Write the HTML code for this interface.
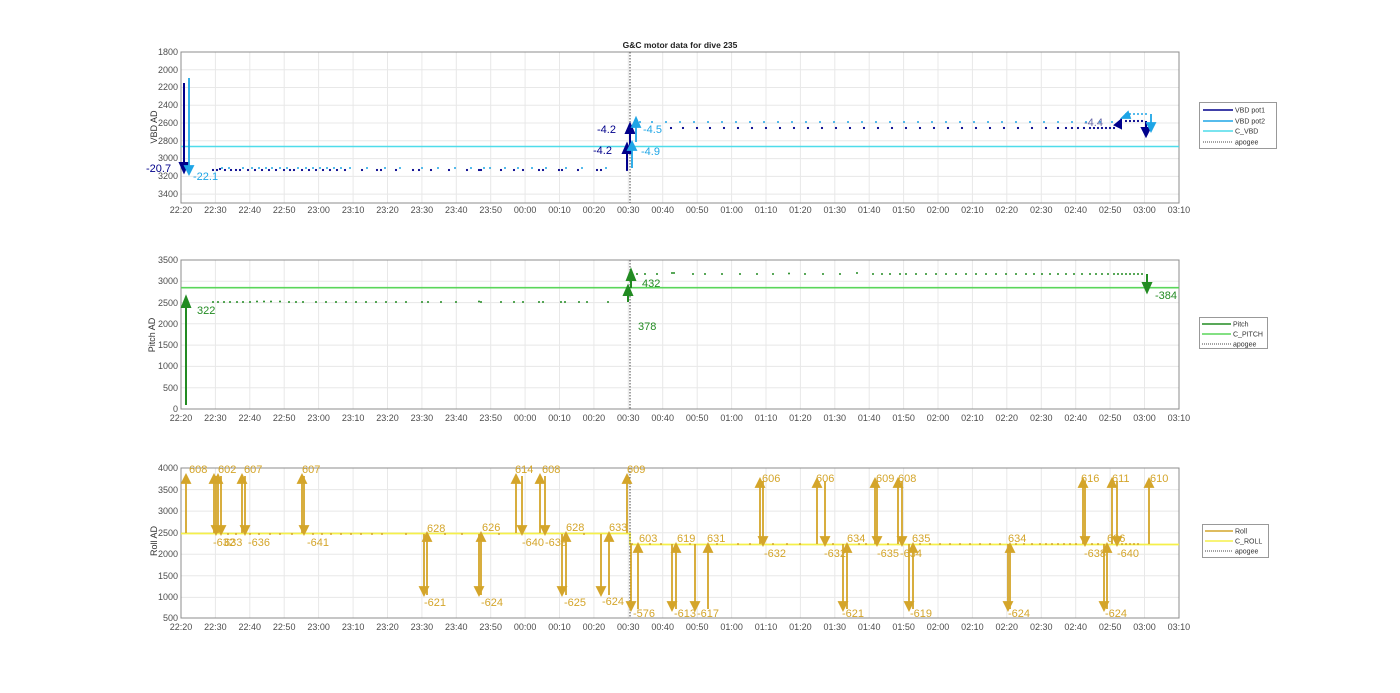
<!DOCTYPE html>
<html><head><meta charset="utf-8"><style>
html,body{margin:0;padding:0;background:#fff;}
svg{display:block;font-family:"Liberation Sans",sans-serif;}
.tx{font-size:9px;fill:#4d4d4d;text-anchor:middle}
.ty{font-size:9px;fill:#4d4d4d;text-anchor:end}
.grid{stroke:#e8e8e8;stroke-width:1;fill:none}
.ax{stroke:#8c8c8c;stroke-width:1;fill:none}
.lg{font-size:7px;fill:#333}
.b1{fill:#00008b;font-size:11px}
.b2{fill:#1ea5e6;font-size:11px}
.g{fill:#228b22;font-size:11px}
.r{fill:#d4a52a;font-size:11px}
</style></head><body>
<svg width="1400" height="693" viewBox="0 0 1400 693" xmlns="http://www.w3.org/2000/svg">
<rect width="1400" height="693" fill="#fff"/>
<text x="680" y="48" font-size="8.5" font-weight="bold" text-anchor="middle" fill="#222">G&amp;C motor data for dive 235</text>

<!-- ================= TOP PLOT ================= -->
<path class="grid" d="M215.4 52V203M249.8 52V203M284.2 52V203M318.6 52V203M353.1 52V203M387.5 52V203M421.9 52V203M456.3 52V203M490.7 52V203M525.1 52V203M559.5 52V203M593.9 52V203M628.3 52V203M662.7 52V203M697.2 52V203M731.6 52V203M766 52V203M800.4 52V203M834.8 52V203M869.2 52V203M903.6 52V203M938 52V203M972.4 52V203M1006.8 52V203M1041.3 52V203M1075.7 52V203M1110.1 52V203M1144.5 52V203M181 69.8H1179M181 87.5H1179M181 105.3H1179M181 123H1179M181 140.8H1179M181 158.6H1179M181 176.4H1179M181 194.1H1179"/>
<rect class="ax" x="181" y="52" width="998" height="151"/>
<g class="ty"><text x="178" y="55">1800</text><text x="178" y="73">2000</text><text x="178" y="90">2200</text><text x="178" y="108">2400</text><text x="178" y="126">2600</text><text x="178" y="144">2800</text><text x="178" y="161">3000</text><text x="178" y="179">3200</text><text x="178" y="197">3400</text></g>
<g class="tx"><text x="181" y="213">22:20</text><text x="215.4" y="213">22:30</text><text x="249.8" y="213">22:40</text><text x="284.2" y="213">22:50</text><text x="318.6" y="213">23:00</text><text x="353.1" y="213">23:10</text><text x="387.5" y="213">23:20</text><text x="421.9" y="213">23:30</text><text x="456.3" y="213">23:40</text><text x="490.7" y="213">23:50</text><text x="525.1" y="213">00:00</text><text x="559.5" y="213">00:10</text><text x="593.9" y="213">00:20</text><text x="628.3" y="213">00:30</text><text x="662.7" y="213">00:40</text><text x="697.2" y="213">00:50</text><text x="731.6" y="213">01:00</text><text x="766" y="213">01:10</text><text x="800.4" y="213">01:20</text><text x="834.8" y="213">01:30</text><text x="869.2" y="213">01:40</text><text x="903.6" y="213">01:50</text><text x="938" y="213">02:00</text><text x="972.4" y="213">02:10</text><text x="1006.8" y="213">02:20</text><text x="1041.3" y="213">02:30</text><text x="1075.7" y="213">02:40</text><text x="1110.1" y="213">02:50</text><text x="1144.5" y="213">03:00</text><text x="1178.9" y="213">03:10</text></g>
<text transform="translate(157,127) rotate(-90)" font-size="9" fill="#333" text-anchor="middle">VBD AD</text>
<!-- C_VBD -->
<line x1="181" y1="146.5" x2="1179" y2="146.5" stroke="#4fdcea" stroke-width="1.6"/>
<!-- dots pot1 -->
<path stroke="#00008b" stroke-width="2.2" stroke-linecap="round" fill="none" d="M213 170h0M217 170h0M220 169h0M225 170h0M231 170h0M236 170h0M240 170h0M248 170h0M255 170h0M262 170h0M269 170h0M276 170h0M284 170h0M290 170h0M294 170h0M302 170h0M309 170h0M316 170h0M323 170h0M330 170h0M337 170h0M345 170h0M362 170h0M377 170h0M381 170h0M396 170h0M413 170h0M419 170h0M431 170h0M449 170h0M467 170h0M479 170h0M481 170h0M501 170h0M514 170h0M523 170h0M539 170h0M543 170h0M559 170h0M562 170h0M578 170h0M597 170h0M601 170h0M627 170h0M671 128h0M683 128h0M697 128h0M710 128h0M724 128h0M738 128h0M752 128h0M766 128h0M780 128h0M794 128h0M808 128h0M822 128h0M836 128h0M850 128h0M864 128h0M878 128h0M892 128h0M906 128h0M920 128h0M934 128h0M948 128h0M962 128h0M976 128h0M990 128h0M1004 128h0M1018 128h0M1032 128h0M1046 128h0M1058 128h0M1066 128h0M1072 128h0M1078 128h0M1084 128h0M1090 128h0M1094 128h0M1098 128h0M1102 128h0M1106 128h0M1110 128h0M1114 128h0M1126 121h0M1130 121h0M1134 121h0M1138 121h0M1142 121h0"/>
<path stroke="#1ea5e6" stroke-width="2" stroke-linecap="round" fill="none" d="M222 168h0M229 168h0M243 168h0M252 168h0M259 168h0M266 168h0M272 168h0M280 168h0M287 168h0M298 168h0M306 168h0M313 168h0M320 168h0M327 168h0M334 168h0M341 168h0M350 168h0M367 168h0M385 168h0M400 168h0M422 168h0M438 168h0M455 168h0M471 168h0M484 168h0M490 168h0M505 168h0M518 168h0M532 168h0M546 168h0M566 168h0M582 168h0M606 168h0M640 122h0M652 122h0M666 122h0M680 122h0M694 122h0M708 122h0M722 122h0M736 122h0M750 122h0M764 122h0M778 122h0M792 122h0M806 122h0M820 122h0M834 122h0M848 122h0M862 122h0M876 122h0M890 122h0M904 122h0M918 122h0M932 122h0M946 122h0M960 122h0M974 122h0M988 122h0M1002 122h0M1016 122h0M1030 122h0M1044 122h0M1058 122h0M1072 122h0M1086 122h0M1100 122h0M1112 122h0M1126 114h0M1130 114h0M1134 114h0M1138 114h0M1142 114h0M1146 114h0"/>
<!-- apogee -->
<line x1="630" y1="52" x2="630" y2="203" stroke="#444" stroke-width="1" stroke-dasharray="1.5,1.5"/>
<!-- arrows top -->
<g stroke="#00008b" stroke-width="2" fill="#00008b">
<line x1="184" y1="83" x2="184" y2="165"/><polygon points="180,163 188,163 184,172"/>
<line x1="627" y1="170" x2="627" y2="152"/><polygon points="623,153 631,153 627,144" />
<line x1="630" y1="146" x2="630" y2="132"/><polygon points="626,133 634,133 630,124"/>
<line x1="1120" y1="123" x2="1120" y2="123"/><polygon points="1115,125 1121,120 1121,128"/>
<line x1="1146" y1="121" x2="1146" y2="129"/><polygon points="1142,128 1150,128 1146,136"/>
</g>
<g stroke="#1ea5e6" stroke-width="1.8" fill="#1ea5e6">
<line x1="189" y1="78" x2="189" y2="168"/><polygon points="185,166 193,166 189,174"/>
<line x1="632" y1="168" x2="632" y2="149"/><polygon points="628,150 636,150 632,142"/>
<line x1="636" y1="142" x2="636" y2="126"/><polygon points="632,127 640,127 636,118"/>
<line x1="1125" y1="116" x2="1125" y2="116"/><polygon points="1122,118 1128,112 1130,118"/>
<line x1="1151" y1="114" x2="1151" y2="124"/><polygon points="1147,123 1155,123 1151,131"/>
</g>
<text class="b1" x="146" y="172">-20.7</text>
<text class="b2" x="193" y="180">-22.1</text>
<text class="b1" x="597" y="133">-4.2</text>
<text class="b1" x="593" y="154">-4.2</text>
<text class="b2" x="643" y="133">-4.5</text>
<text class="b2" x="641" y="155">-4.9</text>
<text x="1084" y="126" font-size="11" fill="#6a6aaa">-4.4</text>
<!-- legend top -->
<rect x="1199.5" y="102.5" width="77" height="46" fill="#fff" stroke="#999"/>
<line x1="1203" y1="110" x2="1233" y2="110" stroke="#00008b" stroke-width="1.6"/><text class="lg" x="1235" y="112.5">VBD pot1</text>
<line x1="1203" y1="121" x2="1233" y2="121" stroke="#1ea5e6" stroke-width="1.6"/><text class="lg" x="1235" y="123.5">VBD pot2</text>
<line x1="1203" y1="131" x2="1233" y2="131" stroke="#4fdcea" stroke-width="1.6"/><text class="lg" x="1235" y="133.5">C_VBD</text>
<line x1="1203" y1="142" x2="1233" y2="142" stroke="#444" stroke-dasharray="1,1"/><text class="lg" x="1235" y="144.5">apogee</text>

<!-- ================= MIDDLE PLOT ================= -->
<path class="grid" d="M215.4 260V409M249.8 260V409M284.2 260V409M318.6 260V409M353.1 260V409M387.5 260V409M421.9 260V409M456.3 260V409M490.7 260V409M525.1 260V409M559.5 260V409M593.9 260V409M628.3 260V409M662.7 260V409M697.2 260V409M731.6 260V409M766 260V409M800.4 260V409M834.8 260V409M869.2 260V409M903.6 260V409M938 260V409M972.4 260V409M1006.8 260V409M1041.3 260V409M1075.7 260V409M1110.1 260V409M1144.5 260V409M181 281.3H1179M181 302.6H1179M181 323.8H1179M181 345.1H1179M181 366.4H1179M181 387.7H1179"/>
<rect class="ax" x="181" y="260" width="998" height="149"/>
<g class="ty"><text x="178" y="263">3500</text><text x="178" y="284">3000</text><text x="178" y="306">2500</text><text x="178" y="327">2000</text><text x="178" y="348">1500</text><text x="178" y="369">1000</text><text x="178" y="391">500</text><text x="178" y="412">0</text></g>
<g class="tx"><text x="181" y="421">22:20</text><text x="215.4" y="421">22:30</text><text x="249.8" y="421">22:40</text><text x="284.2" y="421">22:50</text><text x="318.6" y="421">23:00</text><text x="353.1" y="421">23:10</text><text x="387.5" y="421">23:20</text><text x="421.9" y="421">23:30</text><text x="456.3" y="421">23:40</text><text x="490.7" y="421">23:50</text><text x="525.1" y="421">00:00</text><text x="559.5" y="421">00:10</text><text x="593.9" y="421">00:20</text><text x="628.3" y="421">00:30</text><text x="662.7" y="421">00:40</text><text x="697.2" y="421">00:50</text><text x="731.6" y="421">01:00</text><text x="766" y="421">01:10</text><text x="800.4" y="421">01:20</text><text x="834.8" y="421">01:30</text><text x="869.2" y="421">01:40</text><text x="903.6" y="421">01:50</text><text x="938" y="421">02:00</text><text x="972.4" y="421">02:10</text><text x="1006.8" y="421">02:20</text><text x="1041.3" y="421">02:30</text><text x="1075.7" y="421">02:40</text><text x="1110.1" y="421">02:50</text><text x="1144.5" y="421">03:00</text><text x="1178.9" y="421">03:10</text></g>
<text transform="translate(155,335) rotate(-90)" font-size="9" fill="#333" text-anchor="middle">Pitch AD</text>
<line x1="181" y1="287.7" x2="1179" y2="287.7" stroke="#5ad65a" stroke-width="1.6"/>
<path stroke="#228b22" stroke-width="2" stroke-linecap="round" fill="none" d="M213 302h0M218 302h0M224 302h0M230 302h0M237 302h0M243 302h0M250 302h0M257 301.5h0M264 301.5h0M271 301.5h0M280 301.5h0M289 302h0M296 302h0M303 302h0M316 302h0M326 302h0M336 302h0M346 302h0M356 302h0M366 302h0M376 302h0M386 302h0M396 302h0M406 302h0M422 302h0M428 302h0M441 302h0M456 302h0M479 301.5h0M481 302h0M501 302h0M514 302h0M523 302h0M539 302h0M543 302h0M561 302h0M565 302h0M579 302h0M587 302h0M608 302h0M637 274h0M645 274h0M657 274h0M672 273h0M674 273h0M693 274h0M705 274h0M722 274h0M740 274h0M757 274h0M773 274h0M789 273.5h0M805 274h0M823 274h0M840 274h0M857 273h0M873 274h0M882 274h0M890 274h0M900 274h0M906 274h0M916 274h0M926 274h0M936 274h0M946 274h0M956 274h0M966 274h0M976 274h0M986 274h0M996 274h0M1006 274h0M1016 274h0M1026 274h0M1034 274h0M1042 274h0M1050 274h0M1058 274h0M1066 274h0M1074 274h0M1082 274h0M1090 274h0M1096 274h0M1102 274h0M1108 274h0M1114 274h0M1118 274h0M1122 274h0M1126 274h0M1130 274h0M1134 274h0M1138 274h0M1142 274h0"/>
<line x1="630" y1="260" x2="630" y2="409" stroke="#444" stroke-dasharray="1.5,1.5"/>
<g stroke="#228b22" stroke-width="2" fill="#228b22">
<line x1="186" y1="405" x2="186" y2="306"/><polygon points="182,307 190,307 186,297"/>
<line x1="628" y1="302" x2="628" y2="294"/><polygon points="624,295 632,295 628,286"/>
<line x1="631" y1="288" x2="631" y2="279"/><polygon points="627,280 635,280 631,270"/>
<line x1="1147" y1="274" x2="1147" y2="284"/><polygon points="1143,283 1151,283 1147,292"/>
</g>
<text class="g" x="197" y="314">322</text>
<text class="g" x="638" y="330">378</text>
<text class="g" x="642" y="287">432</text>
<text class="g" x="1155" y="299">-384</text>
<rect x="1199.5" y="317.5" width="68" height="31" fill="#fff" stroke="#999"/>
<line x1="1202" y1="324" x2="1231" y2="324" stroke="#228b22" stroke-width="1.6"/><text class="lg" x="1233" y="326.5">Pitch</text>
<line x1="1202" y1="334" x2="1231" y2="334" stroke="#5ad65a" stroke-width="1.6"/><text class="lg" x="1233" y="336.5">C_PITCH</text>
<line x1="1202" y1="344" x2="1231" y2="344" stroke="#444" stroke-dasharray="1,1"/><text class="lg" x="1233" y="346.5">apogee</text>

<!-- ================= BOTTOM PLOT ================= -->
<path class="grid" d="M215.4 468V618M249.8 468V618M284.2 468V618M318.6 468V618M353.1 468V618M387.5 468V618M421.9 468V618M456.3 468V618M490.7 468V618M525.1 468V618M559.5 468V618M593.9 468V618M628.3 468V618M662.7 468V618M697.2 468V618M731.6 468V618M766 468V618M800.4 468V618M834.8 468V618M869.2 468V618M903.6 468V618M938 468V618M972.4 468V618M1006.8 468V618M1041.3 468V618M1075.7 468V618M1110.1 468V618M1144.5 468V618M181 489.6H1179M181 511.1H1179M181 532.7H1179M181 554.3H1179M181 575.8H1179M181 597.4H1179"/>
<rect class="ax" x="181" y="468" width="998" height="150"/>
<g class="ty"><text x="178" y="471">4000</text><text x="178" y="493">3500</text><text x="178" y="514">3000</text><text x="178" y="536">2500</text><text x="178" y="557">2000</text><text x="178" y="579">1500</text><text x="178" y="600">1000</text><text x="178" y="621">500</text></g>
<g class="tx"><text x="181" y="630">22:20</text><text x="215.4" y="630">22:30</text><text x="249.8" y="630">22:40</text><text x="284.2" y="630">22:50</text><text x="318.6" y="630">23:00</text><text x="353.1" y="630">23:10</text><text x="387.5" y="630">23:20</text><text x="421.9" y="630">23:30</text><text x="456.3" y="630">23:40</text><text x="490.7" y="630">23:50</text><text x="525.1" y="630">00:00</text><text x="559.5" y="630">00:10</text><text x="593.9" y="630">00:20</text><text x="628.3" y="630">00:30</text><text x="662.7" y="630">00:40</text><text x="697.2" y="630">00:50</text><text x="731.6" y="630">01:00</text><text x="766" y="630">01:10</text><text x="800.4" y="630">01:20</text><text x="834.8" y="630">01:30</text><text x="869.2" y="630">01:40</text><text x="903.6" y="630">01:50</text><text x="938" y="630">02:00</text><text x="972.4" y="630">02:10</text><text x="1006.8" y="630">02:20</text><text x="1041.3" y="630">02:30</text><text x="1075.7" y="630">02:40</text><text x="1110.1" y="630">02:50</text><text x="1144.5" y="630">03:00</text><text x="1178.9" y="630">03:10</text></g>
<text transform="translate(157,541) rotate(-90)" font-size="9" fill="#333" text-anchor="middle">Roll AD</text>
<path stroke="#f5f04a" stroke-width="1.8" fill="none" d="M181 533.5H630V544.5H1179"/>
<path stroke="#d4a52a" stroke-width="2" stroke-linecap="round" fill="none" d="M228 534h0M236 534h0M250 534h0M259 534h0M270 534h0M280 534h0M292 534h0M313 534h0M322 534h0M331 534h0M341 534h0M351 534h0M361 534h0M372 534h0M382 534h0M406 534h0M445 534h0M462 534h0M499 534h0M584 534h0M632 544h0M650 544h0M661 544h0M690 544h0M717 544h0M738 544h0M750 544h0M773 544h0M787 544h0M800 544h0M833 544h0M859 544h0M866 544h0M888 544h0M920 544h0M930 544h0M940 544h0M950 544h0M960 544h0M970 544h0M980 544h0M990 544h0M1000 544h0M1016 544h0M1024 544h0M1032 544h0M1040 544h0M1046 544h0M1052 544h0M1058 544h0M1064 544h0M1070 544h0M1076 544h0M1092 544h0M1098 544h0M1122 544h0M1126 544h0M1130 544h0M1134 544h0M1138 544h0"/>
<line x1="630" y1="468" x2="630" y2="618" stroke="#444" stroke-dasharray="1.5,1.5"/>
<!-- roll arrows: up = tip at top, down = tip at bottom -->
<g stroke="#d4a52a" stroke-width="1.8" fill="#d4a52a">
<!-- up to 3800 from 2450 -->
<path d="M186 533V482M214 533V482M218 533V482M242 533V482M302 533V482M516 533V482M540 533V482M627 533V482M760 544V486M817 544V486M875 544V486M898 544V486M1083 544V486M1112 544V486M1149 544V486"/>
<path d="M182 483h8l-4-8zM210 483h8l-4-8zM214 483h8l-4-8zM238 483h8l-4-8zM298 483h8l-4-8zM512 483h8l-4-8zM536 483h8l-4-8zM623 483h8l-4-8zM756 487h8l-4-8zM813 487h8l-4-8zM871 487h8l-4-8zM894 487h8l-4-8zM1079 487h8l-4-8zM1108 487h8l-4-8zM1145 487h8l-4-8z"/>
<!-- down from 3800 to baseline -->
<path d="M216 476V527M221 476V527M245 476V527M304 476V527M522 476V527M545 476V527M763 481V538M825 481V538M877 481V538M902 481V538M1085 481V538M1117 481V538"/>
<path d="M212 526h8l-4 8zM217 526h8l-4 8zM241 526h8l-4 8zM300 526h8l-4 8zM518 526h8l-4 8zM541 526h8l-4 8zM759 537h8l-4 8zM821 537h8l-4 8zM873 537h8l-4 8zM898 537h8l-4 8zM1081 537h8l-4 8zM1113 537h8l-4 8z"/>
<!-- down deep from baseline -->
<path d="M424 534V588M479 534V588M562 534V588M601 534V588M631 544V603M672 544V603M695 544V603M843 544V603M909 544V603M1008 544V603M1104 544V603"/>
<path d="M420 587h8l-4 8zM475 587h8l-4 8zM558 587h8l-4 8zM597 587h8l-4 8zM627 602h8l-4 8zM668 602h8l-4 8zM691 602h8l-4 8zM839 602h8l-4 8zM905 602h8l-4 8zM1004 602h8l-4 8zM1100 602h8l-4 8z"/>
<!-- up from deep to baseline -->
<path d="M427 595V540M481 595V540M566 595V540M609 595V540M638 609V551M676 609V551M708 609V551M847 609V551M913 609V551M1010 609V551M1107 609V551"/>
<path d="M423 541h8l-4-8zM477 541h8l-4-8zM562 541h8l-4-8zM605 541h8l-4-8zM634 552h8l-4-8zM672 552h8l-4-8zM704 552h8l-4-8zM843 552h8l-4-8zM909 552h8l-4-8zM1006 552h8l-4-8zM1103 552h8l-4-8z"/>
</g>
<g class="r">
<text x="189" y="473">608</text><text x="218" y="473">602</text><text x="244" y="473">607</text><text x="302" y="473">607</text><text x="515" y="473">614</text><text x="542" y="473">608</text><text x="627" y="473">609</text>
<text x="213" y="546">-632</text><text x="224" y="546">633</text><text x="248" y="546">-636</text><text x="307" y="546">-641</text><text x="522" y="546">-640</text><text x="545" y="546">-639</text>
<text x="427" y="532">628</text><text x="482" y="531">626</text><text x="566" y="531">628</text><text x="609" y="531">633</text>
<text x="424" y="606">-621</text><text x="481" y="606">-624</text><text x="564" y="606">-625</text><text x="602" y="605">-624</text>
<text x="639" y="542">603</text><text x="677" y="542">619</text><text x="707" y="542">631</text><text x="847" y="542">634</text><text x="912" y="542">635</text><text x="1008" y="542">634</text><text x="1107" y="542">636</text>
<text x="633" y="617">-576</text><text x="674" y="617">-613</text><text x="697" y="617">-617</text><text x="842" y="617">-621</text><text x="910" y="617">-619</text><text x="1008" y="617">-624</text><text x="1105" y="617">-624</text>
<text x="762" y="482">606</text><text x="816" y="482">606</text><text x="876" y="482">609</text><text x="898" y="482">608</text><text x="1081" y="482">616</text><text x="1112" y="482">611</text><text x="1150" y="482">610</text>
<text x="764" y="557">-632</text><text x="824" y="557">-632</text><text x="877" y="557">-635</text><text x="900" y="557">-634</text><text x="1084" y="557">-638</text><text x="1117" y="557">-640</text>
</g>
<rect x="1202.5" y="524.5" width="66" height="33" fill="#fff" stroke="#999"/>
<line x1="1205" y1="531" x2="1233" y2="531" stroke="#d4a52a" stroke-width="1.6"/><text class="lg" x="1235" y="533.5">Roll</text>
<line x1="1205" y1="541" x2="1233" y2="541" stroke="#f5f04a" stroke-width="1.6"/><text class="lg" x="1235" y="543.5">C_ROLL</text>
<line x1="1205" y1="551" x2="1233" y2="551" stroke="#444" stroke-dasharray="1,1"/><text class="lg" x="1235" y="553.5">apogee</text>
</svg>
</body></html>
